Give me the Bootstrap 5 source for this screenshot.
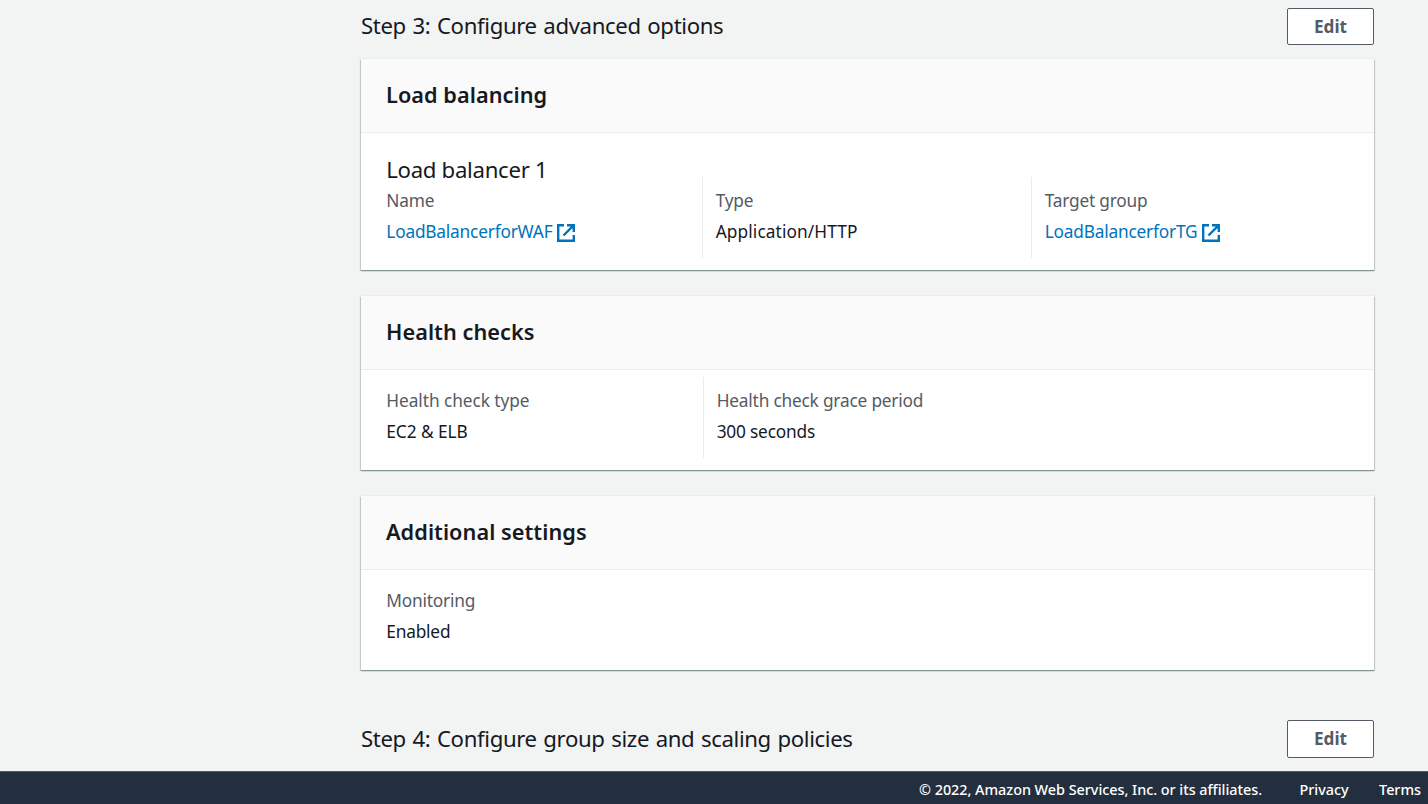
<!DOCTYPE html>
<html lang="en">
<head>
<meta charset="utf-8">
<meta name="viewport" content="width=device-width, initial-scale=1">
<title>Create Auto Scaling group - Review</title>
<link href="https://cdn.jsdelivr.net/npm/bootstrap@5.3.0/dist/css/bootstrap.min.css" rel="stylesheet">
<style>
body{background:#f2f3f3;color:#16191f;font-family:"Noto Sans","Open Sans",sans-serif;font-size:17.3px;letter-spacing:-.2px;line-height:27px}
.review{width:1013px;margin-left:361px}
.step-head{height:37px}
.step-title{font-size:22.2px;line-height:35px;letter-spacing:-.37px;word-spacing:1.2px;font-weight:400}
.step-title.low{line-height:38px}
.btn-edit{--bs-btn-color:#545b64;--bs-btn-bg:#fff;--bs-btn-border-color:#545b64;--bs-btn-hover-bg:#fafafa;--bs-btn-hover-color:#16191f;--bs-btn-border-radius:2px;--bs-btn-padding-y:0;width:87px;height:37px;font-size:17.2px;font-weight:700;letter-spacing:0;line-height:32px}
.btn-edit.tall{height:38px}
.panel{--bs-card-border-width:0;--bs-card-border-radius:0;--bs-card-inner-border-radius:0;--bs-card-bg:#fff;color:inherit;box-shadow:0 1px 1px 0 rgba(0,28,36,.3),1px 1px 1px 0 rgba(0,28,36,.15),-1px 1px 1px 0 rgba(0,28,36,.15)}
.panel + .panel{margin-top:26px}
.panel::before{content:"";position:absolute;inset:-1px 0 auto;height:1px;background:#eaeded}
.panel::after{content:"";position:absolute;inset:auto 0 -1px;height:1px;background:#879596}
.panel-head{height:74px;background:#fafafa;border-bottom:1px solid #eaeded;padding:0 25px}
.panel-head h2{font-size:21.7px;font-weight:600;line-height:71px;letter-spacing:.05px}
.panel-text{height:100px;padding:7px 12px 0}
.panel-text.with-title{height:137px;padding-top:22px}
.sub-title{font-size:22.2px;line-height:30px;letter-spacing:-.3px;padding-left:13.2px;font-weight:400;margin-bottom:-8px}
.field{height:81px;padding:10px 0 0 12.7px;flex:0 0 329px}
.field:first-child{padding-left:13.3px}
.field + .field{border-left:1px solid #eaeded}
.field-wide{flex-basis:330px}
.field dt{font-weight:400;color:#545b64;line-height:27px}
.field dd{line-height:27px;margin:4px 0 0}
.field a{color:#0073bb;text-decoration:none}
.field svg{width:18px;height:18px;margin-left:5px;vertical-align:-4px}
.roomy{letter-spacing:.1px}
.natural{letter-spacing:-.06px}
.foot{height:33px;background:#232f3e;border-top:1px solid #4a5a66;color:#fff;font-size:14.4px;font-weight:500;letter-spacing:-.03px;line-height:36px;padding-right:7px}
.foot a{color:#fff;text-decoration:none}
</style>
</head>
<body class="vh-100 overflow-hidden d-flex flex-column">
<main class="review flex-grow-1">
  <div class="step-head d-flex justify-content-between mt-2" style="margin-bottom:14px">
    <h1 class="step-title mb-0">Step 3: Configure advanced options</h1>
    <button type="button" class="btn btn-edit">Edit</button>
  </div>
  <section class="card panel">
    <div class="panel-head"><h2 class="mb-0">Load balancing</h2></div>
    <div class="panel-text with-title">
      <h3 class="sub-title">Load balancer 1</h3>
      <dl class="d-flex mb-0">
        <div class="field"><dt>Name</dt><dd><a href="#">LoadBalancerforWAF<svg viewBox="0 0 18 18" fill="none" stroke="#0073bb" stroke-width="2.4"><path d="M7 1.2H1.2v15.6h15.6V11M10 1.2h6.8V8M16.8 1.2L6.5 11.5"/></svg></a></dd></div>
        <div class="field"><dt>Type</dt><dd class="roomy">Application/HTTP</dd></div>
        <div class="field"><dt>Target group</dt><dd><a href="#">LoadBalancerforTG<svg viewBox="0 0 18 18" fill="none" stroke="#0073bb" stroke-width="2.4"><path d="M7 1.2H1.2v15.6h15.6V11M10 1.2h6.8V8M16.8 1.2L6.5 11.5"/></svg></a></dd></div>
      </dl>
    </div>
  </section>
  <section class="card panel">
    <div class="panel-head"><h2 class="mb-0">Health checks</h2></div>
    <div class="panel-text">
      <dl class="d-flex mb-0">
        <div class="field field-wide natural"><dt>Health check type</dt><dd>EC2 &amp; ELB</dd></div>
        <div class="field"><dt>Health check grace period</dt><dd>300 seconds</dd></div>
      </dl>
    </div>
  </section>
  <section class="card panel">
    <div class="panel-head"><h2 class="mb-0">Additional settings</h2></div>
    <div class="panel-text">
      <dl class="d-flex mb-0">
        <div class="field"><dt>Monitoring</dt><dd>Enabled</dd></div>
      </dl>
    </div>
  </section>
  <div class="step-head d-flex justify-content-between" style="margin-top:50px">
    <h1 class="step-title low mb-0">Step 4: Configure group size and scaling policies</h1>
    <button type="button" class="btn btn-edit tall">Edit</button>
  </div>
</main>
<footer class="foot d-flex justify-content-end">
  <span>© 2022, Amazon Web Services, Inc. or its affiliates.</span>
  <a href="#" style="margin-left:37.5px">Privacy</a>
  <a href="#" style="margin-left:30.5px">Terms</a>
</footer>
<script src="https://cdn.jsdelivr.net/npm/bootstrap@5.3.0/dist/js/bootstrap.bundle.min.js"></script>
</body>
</html>
